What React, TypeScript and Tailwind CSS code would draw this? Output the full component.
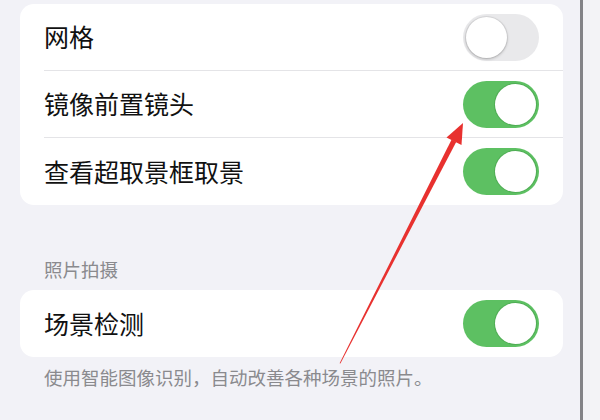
const font = { fontFamily: '"Noto Sans CJK SC", "Noto Sans", sans-serif' };

const Toggle = ({ on }: { on: boolean }) => (
  <div
    className={`w-[76px] h-[47px] rounded-full p-[3px] flex ${
      on ? "bg-[#5dc062] justify-end" : "bg-[#e9e9eb] justify-start"
    }`}
  >
    <div
      className={`w-[41px] h-[41px] rounded-full bg-white ${
        on ? "shadow-[0_0_0_1px_rgba(70,160,75,0.6)]" : "shadow-[0_1px_3px_rgba(0,0,0,0.25),0_0_0_1px_rgba(0,0,0,0.06)]"
      }`}
    />
  </div>
);

const Row = ({ label, on, last }: { label: string; on: boolean; last?: boolean }) => (
  <div className="flex items-center h-[67px] pl-[24px]">
    <div
      className={`flex items-center justify-between flex-1 h-full pr-[24px] ${
        last ? "" : "border-b border-[#e4e4e7]"
      }`}
    >
      <span className="text-[25px] text-[#111111]">{label}</span>
      <Toggle on={on} />
    </div>
  </div>
);

export default function App() {
  return (
    <div className="w-[600px] h-[420px] flex bg-[#f2f2f7] overflow-hidden relative" style={font}>
      <div className="flex-1 px-[20px] pt-[4px] pr-[17px]">
        <div className="bg-white rounded-[14px] overflow-hidden">
          <Row label="网格" on={false} />
          <Row label="镜像前置镜头" on={true} />
          <Row label="查看超取景框取景" on={true} last />
        </div>
        <div className="pl-[24px] mt-[52px] mb-[9px] text-[18.5px] leading-[24px] text-[#8a8a8e]">照片拍摄</div>
        <div className="bg-white rounded-[14px] overflow-hidden">
          <Row label="场景检测" on={true} last />
        </div>
        <div className="pl-[24px] mt-[8px] text-[18.5px] leading-[24px] text-[#8a8a8e]">
          使用智能图像识别，自动改善各种场景的照片。
        </div>
      </div>
      <div className="w-[3px] h-full bg-[#838387]" />
      <div className="w-[17px] h-full bg-[#f3f3f6]" />
      <svg className="absolute left-0 top-0" width="600" height="420" viewBox="0 0 600 420">
        <polygon
          points="339.6,363.2 340.4,363.6 456.2,141.9 451.6,139.6"
          fill="#e8312f"
        />
        <polygon points="463,123 461.5,145 446.5,137.5" fill="#e8312f" />
      </svg>
    </div>
  );
}
